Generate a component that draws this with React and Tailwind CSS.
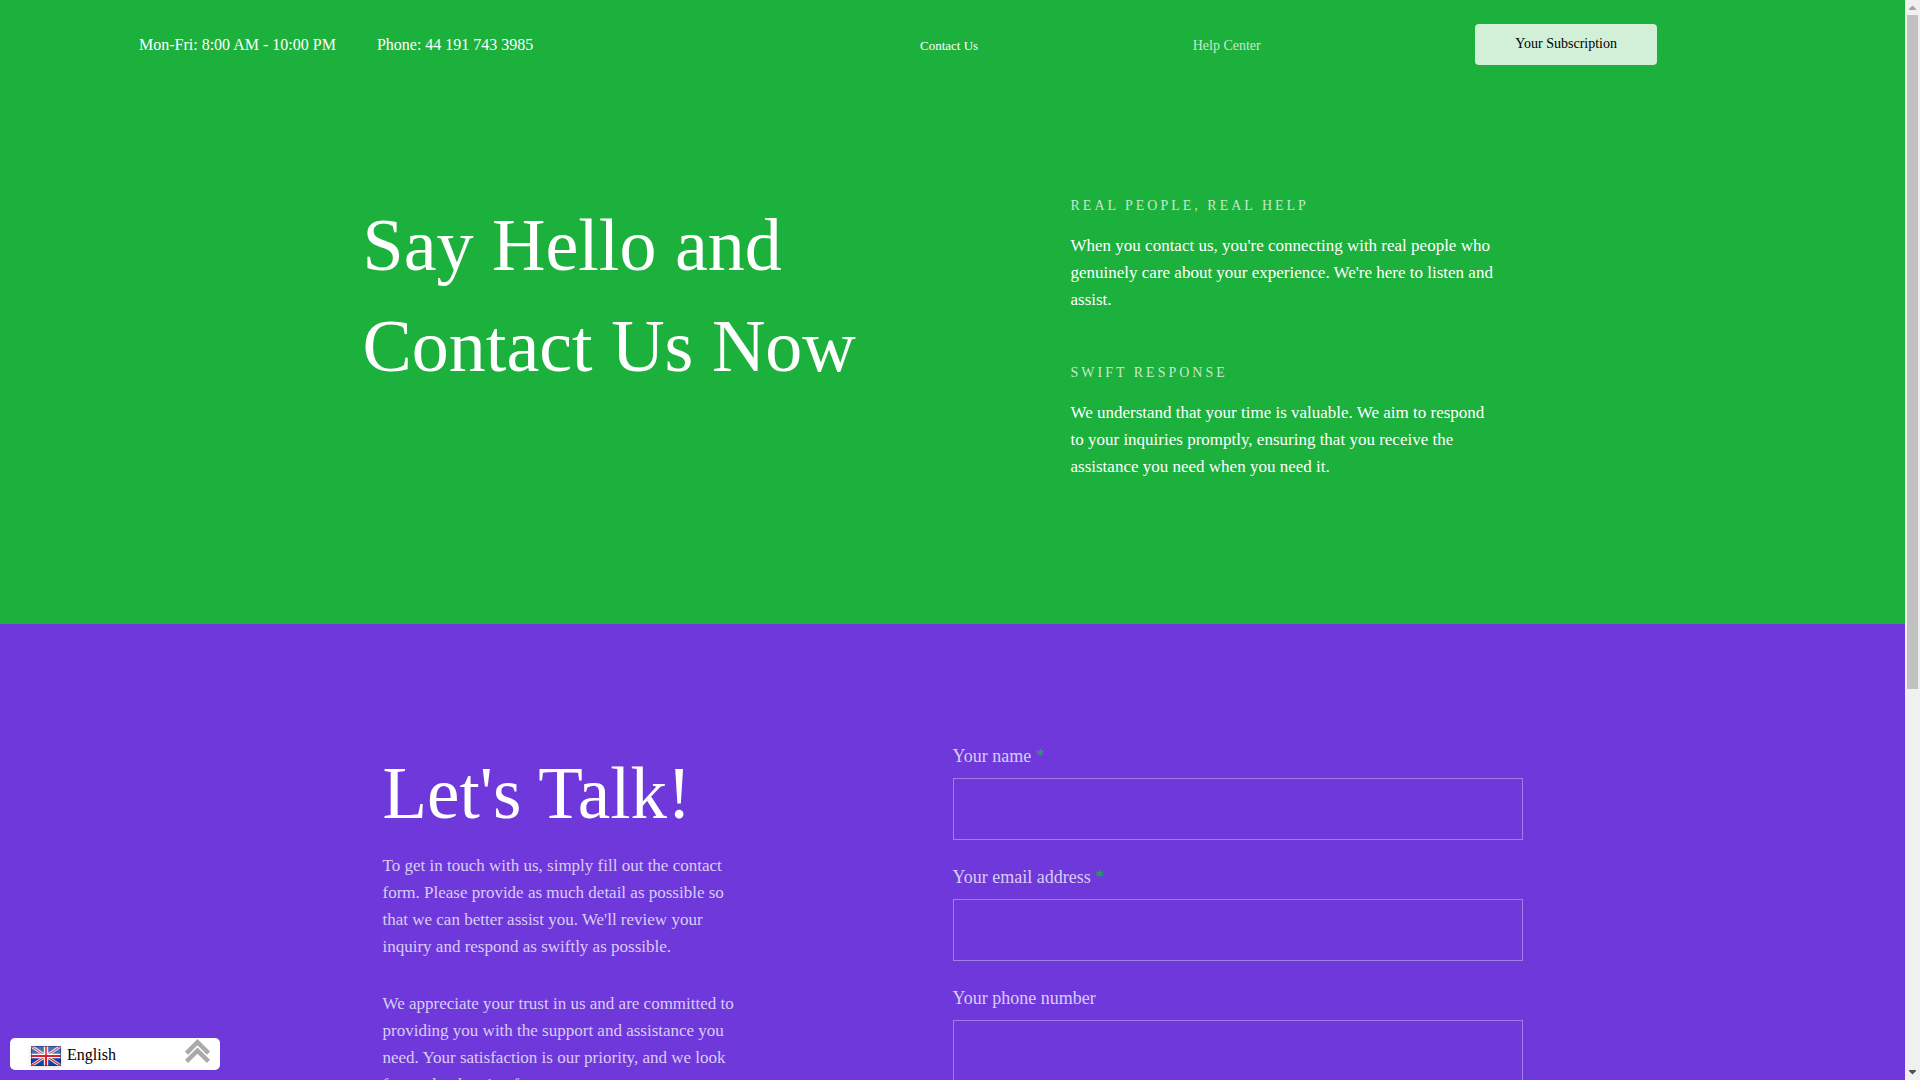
const FIELDS = [
  { id: "name", label: "Your name", type: "text", required: true },
  { id: "email", label: "Your email address", type: "email", required: true },
  { id: "phone", label: "Your phone number", type: "tel", required: false },
];

function Header() {
  return (
    <header className="flex items-center pt-6 pr-[248px] pl-[139px]">
      <div className="flex flex-1 gap-[41px] text-base text-white">
        <span>Mon-Fri: 8:00 AM - 10:00 PM</span>
        <span>Phone: 44 191 743 3985</span>
      </div>
      <nav className="flex w-[737px] items-center justify-between">
        <a href="#contact" className="pt-0.5 text-[13px] text-white">
          Contact Us
        </a>
        <a href="#help" className="pt-0.5 text-sm text-white/75">
          Help Center
        </a>
        <a
          href="#subscription"
          className="rounded bg-white/80 px-10 pt-2.5 pb-[11px] text-sm text-black"
        >
          Your Subscription
        </a>
      </nav>
    </header>
  );
}

function Point({ title, children }) {
  return (
    <div>
      <h2 className="mb-4 text-sm leading-[21px] tracking-[3px] text-white/75 uppercase">
        {title}
      </h2>
      <p className="text-[17px] leading-[27px] text-white">{children}</p>
    </div>
  );
}

function Hero() {
  return (
    <section className="bg-[#1cb03c] pb-36">
      <Header />
      <div className="mx-auto flex max-w-[1180px] pt-[130px]">
        <h1 className="w-3/5 pr-[150px] text-[74px] leading-[101px] text-white">
          Say Hello and Contact Us Now
        </h1>
        <div className="flex w-2/5 flex-col gap-[49px] pr-[45px]">
          <Point title="Real people, real help">
            When you contact us, you're connecting with real people who
            genuinely care about your experience. We're here to listen and
            assist.
          </Point>
          <Point title="Swift response">
            We understand that your time is valuable. We aim to respond to your
            inquiries promptly, ensuring that you receive the assistance you
            need when you need it.
          </Point>
        </div>
      </div>
    </section>
  );
}

function Contact() {
  return (
    <section className="bg-[#6e38db] pt-[118px] pb-24">
      <div className="mx-auto flex max-w-[1140px]">
        <div className="w-1/2">
          <h2 className="mb-[7px] text-[73px] leading-[103px] text-white">
            Let's Talk!
          </h2>
          <div className="flex max-w-[365px] flex-col gap-[30px] text-[17px] leading-[27px] text-white/75">
            <p>
              To get in touch with us, simply fill out the contact form. Please
              provide as much detail as possible so that we can better assist
              you. We'll review your inquiry and respond as swiftly as possible.
            </p>
            <p>
              We appreciate your trust in us and are committed to providing you
              with the support and assistance you need. Your satisfaction is our
              priority, and we look forward to hearing from you.
            </p>
          </div>
        </div>
        <form className="flex w-1/2 flex-col gap-[23px]">
          {FIELDS.map((f) => (
            <div key={f.id}>
              <label
                htmlFor={f.id}
                className="mb-[7px] block text-lg leading-[29px] text-white/75"
              >
                {f.label}
                {f.required && <span className="text-[#1cb03c]"> *</span>}
              </label>
              <input
                id={f.id}
                type={f.type}
                required={f.required}
                className="block h-[62px] w-full border border-white/35 bg-transparent px-5 text-lg text-white outline-none"
              />
            </div>
          ))}
        </form>
      </div>
    </section>
  );
}

function Flag() {
  return (
    <svg viewBox="0 0 30 20" className="mt-1 h-5 w-[30px] drop-shadow-sm" aria-hidden="true">
      <defs>
        <clipPath id="flag-edge">
          <path d="M0 0h30v20H0z" />
        </clipPath>
      </defs>
      <g clipPath="url(#flag-edge)">
        <path d="M0 0h30v20H0z" fill="#0f3f9f" />
        <path d="M0 0l30 20M30 0L0 20" stroke="#e8eaf4" strokeWidth="3" />
        <path d="M0 0l30 20M30 0L0 20" stroke="#d8232a" strokeWidth="1.1" />
        <path d="M15 0v20M0 10h30" stroke="#fff" strokeWidth="4.4" />
        <path d="M15 0v20M0 10h30" stroke="#d8232a" strokeWidth="2.2" />
        <path d="M0 0h30v9H0z" fill="#fff" fillOpacity=".25" />
        <path d="M.5 .5h29v19H.5z" fill="none" stroke="#0a2a70" strokeOpacity=".5" />
      </g>
    </svg>
  );
}

function LanguagePicker() {
  return (
    <button
      type="button"
      className="fixed bottom-2.5 left-2.5 flex h-8 w-[210px] items-center rounded-[5px] bg-white pr-2.5 pl-[21px] text-base text-black"
    >
      <Flag />
      <span className="ml-1.5 pt-0.5">English</span>
      <svg
        viewBox="0 0 25 24"
        className="mb-1.5 ml-auto h-6 w-[25px]"
        fill="none"
        stroke="#aaa"
        strokeWidth="4.4"
        aria-hidden="true"
      >
        <path d="M1.5 14.2L12.5 3.2L23.5 14.2M1.5 22.4L12.5 11.6L23.5 22.4" />
      </svg>
    </button>
  );
}

function Scrollbar() {
  return (
    <div className="flex w-[15px] shrink-0 flex-col items-center bg-[#f0f0f0]" aria-hidden="true">
      <svg viewBox="0 0 15 15" className="h-[15px] w-[15px]" fill="#a3a3a3">
        <path d="M4 10V9L7.500 5.500L11 9V10z" />
      </svg>
      <div className="flex w-full flex-1 flex-col px-0.5">
        <div className="h-[64.2%] bg-[#c1c1c1]" />
      </div>
      <svg viewBox="0 0 15 15" className="h-[15px] w-[15px]" fill="#505050">
        <path d="M4 5V6L7.500 9.500L11 6V5z" />
      </svg>
    </div>
  );
}

export default function App() {
  return (
    <div className="flex h-screen font-['Liberation_Serif',serif]">
      <main className="min-w-0 flex-1 overflow-hidden">
        <Hero />
        <Contact />
      </main>
      <Scrollbar />
      <LanguagePicker />
    </div>
  );
}
